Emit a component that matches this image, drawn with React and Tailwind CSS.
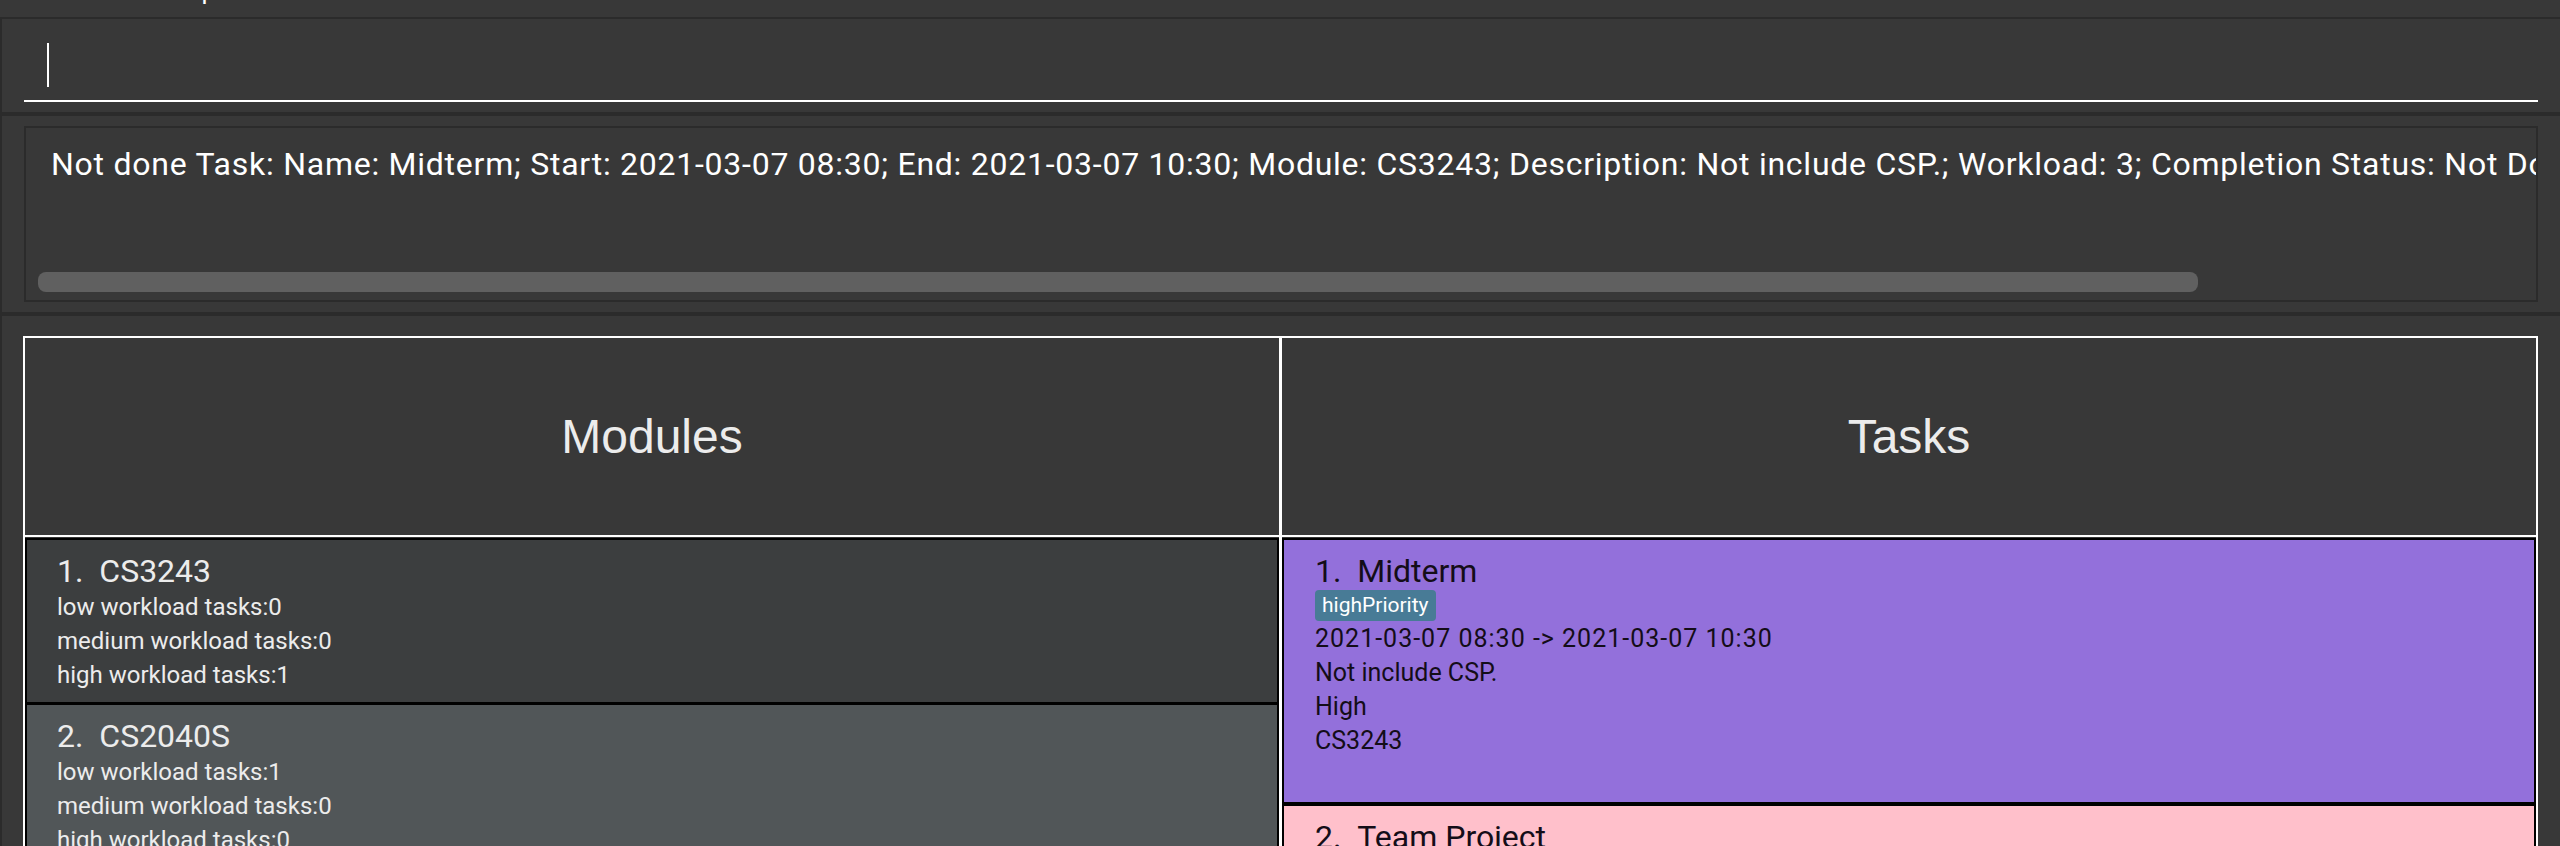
const MODULES = [
  { name: 'CS3243', low: 0, medium: 0, high: 1 },
  { name: 'CS2040S', low: 1, medium: 0, high: 0 },
];

const TASKS = [
  {
    name: 'Midterm',
    tag: 'highPriority',
    time: '2021-03-07 08:30 -> 2021-03-07 10:30',
    description: 'Not include CSP.',
    workload: 'High',
    module: 'CS3243',
    color: 'bg-[#9370db]',
  },
  {
    name: 'Team Project',
    tag: 'lowPriority',
    time: '2021-03-10 12:00 -> 2021-03-10 14:00',
    description: 'Finish the draft.',
    workload: 'Low',
    module: 'CS2040S',
    color: 'bg-[#ffc0cb]',
  },
];

const RESULT =
  'Not done Task: Name: Midterm; Start: 2021-03-07 08:30; End: 2021-03-07 10:30; Module: CS3243; Description: Not include CSP.; Workload: 3; Completion Status: Not Done';

const body = { fontFamily: 'Roboto, "Liberation Sans", sans-serif' };
const heading = { fontFamily: '"Liberation Sans", Arial, sans-serif' };

function ModuleCard({ index, module }) {
  return (
    <div className="border-x-2 border-b-[3px] border-black first:border-t-2 odd:bg-[#3c3e3f] even:bg-[#515658] pl-[30px] pt-[12px] pb-[10px] text-[#ececec]">
      <div className="text-[32px] leading-[38px]">{index}.&nbsp;&nbsp;{module.name}</div>
      <div className="text-[24px] leading-[34px]">low workload tasks:{module.low}</div>
      <div className="text-[24px] leading-[34px]">medium workload tasks:{module.medium}</div>
      <div className="text-[24px] leading-[34px]">high workload tasks:{module.high}</div>
    </div>
  );
}

function TaskCard({ index, task }) {
  return (
    <div className={`border-x-2 border-b-4 border-black first:border-t-2 ${task.color} pl-[31px] pt-[12px] pb-[44px] text-[#140d18]`}>
      <div className="text-[32px] leading-[38px]">{index}.&nbsp;&nbsp;{task.name}</div>
      <div className="flex h-[32px] items-start">
        <span className="h-[31px] rounded-[4px] bg-[#487b96] px-[7px] text-[21px] leading-[31px] text-white">{task.tag}</span>
      </div>
      <div className="text-[25px] leading-[34px] tracking-[1px]">{task.time}</div>
      <div className="text-[25px] leading-[34px]">{task.description}</div>
      <div className="text-[25px] leading-[34px]">{task.workload}</div>
      <div className="text-[25px] leading-[34px]">{task.module}</div>
    </div>
  );
}

export default function App() {
  return (
    <div className="h-[846px] w-[2560px] overflow-hidden bg-[#383838]" style={body}>
      {/* menu bar, scrolled mostly out of view */}
      <div className="h-[19px] overflow-hidden border-b-2 border-[#2b2b2b]">
        <div className="-mt-[25px] flex gap-[62px] pl-[60px] text-[26px] leading-[30px] text-white">
          <span>File</span>
          <span>Help</span>
        </div>
      </div>

      {/* command box */}
      <div className="border-l-2 border-[#2b2b2b] pl-[22px] pr-[22px] pt-[11px] pb-[10px]">
        <div className="flex h-[72px] items-center border-b-2 border-white">
          <div className="ml-[23px] h-[44px] w-[2px] bg-white" />
        </div>
      </div>

      {/* result display */}
      <div className="border-t-4 border-l-2 border-[#2b2b2b] px-[22px] py-[10px]">
        <div className="flex h-[176px] flex-col border-2 border-[#2b2b2b]">
          <div className="overflow-hidden whitespace-nowrap pl-[25px] pt-[18px] text-[32px] leading-[36px] tracking-[0.75px] text-white">
            {RESULT}
          </div>
          <div className="flex-1" />
          <div className="mb-[8px] ml-[12px] h-[20px] w-[2160px] rounded-[8px] bg-[#606060]" />
        </div>
      </div>

      {/* lists */}
      <div className="border-t-4 border-l-2 border-[#2b2b2b] pl-[21px] pr-[22px] pt-[20px]">
        <div className="flex border-2 border-white">
          <div className="flex-1">
            <div className="flex h-[199px] items-center justify-center border-b-2 border-white text-[48px] text-[#ececec]" style={heading}>
              Modules
            </div>
            <div className="pt-px">
              {MODULES.map((m, i) => (
                <ModuleCard key={m.name} index={i + 1} module={m} />
              ))}
            </div>
          </div>
          <div className="flex-1 border-l-[3px] border-white">
            <div className="flex h-[199px] items-center justify-center border-b-2 border-white text-[48px] text-[#ececec]" style={heading}>
              Tasks
            </div>
            <div className="pt-px">
              {TASKS.map((t, i) => (
                <TaskCard key={t.name} index={i + 1} task={t} />
              ))}
            </div>
          </div>
        </div>
      </div>
    </div>
  );
}
